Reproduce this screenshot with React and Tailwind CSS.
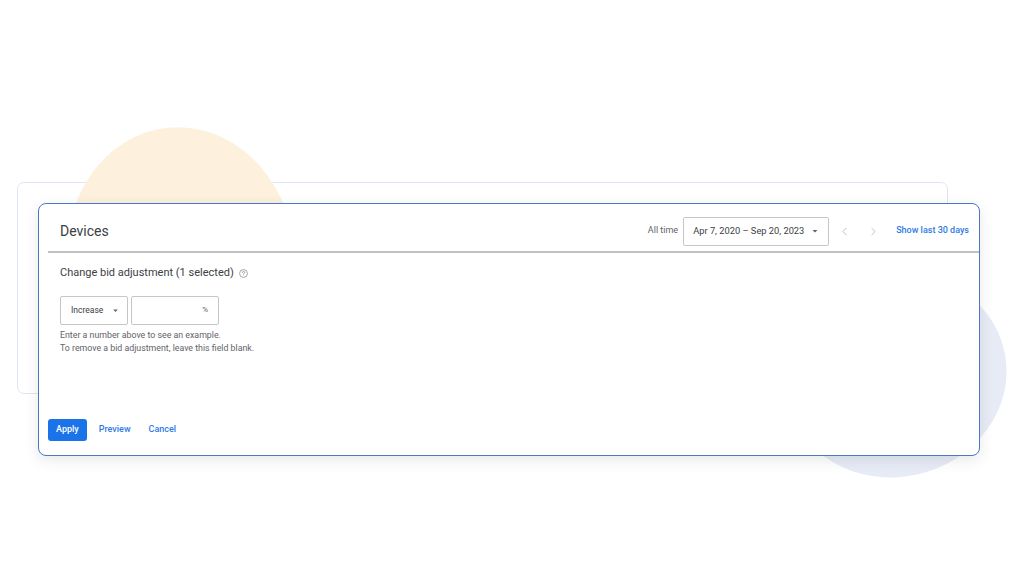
import { ChevronLeft, ChevronRight } from 'lucide-react';

const font = { fontFamily: 'Roboto, "Noto Sans", Arial, sans-serif' };

function Caret({ className = '' }) {
  return (
    <svg viewBox="0 0 24 24" className={className} fill="currentColor">
      <path d="M7 10l5 5 5-5z" />
    </svg>
  );
}

function HelpIcon() {
  return (
    <svg viewBox="0 0 16 16" className="w-[9px] h-[9px] text-[#80868b]" fill="none" stroke="currentColor" strokeWidth="1.3">
      <circle cx="8" cy="8" r="7" />
      <path d="M6 6.2a2 2 0 1 1 2.6 1.9c-.4.2-.6.5-.6.9v.6" strokeLinecap="round" />
      <circle cx="8" cy="11.6" r=".6" fill="currentColor" stroke="none" />
    </svg>
  );
}

export default function App() {
  return (
    <div className="relative w-full h-[579px] bg-white overflow-hidden" style={font}>
      {/* background decoration */}
      <div className="absolute left-[17px] top-[182px] w-[931px] h-[212px] rounded-[7px] border border-[#dfe6f3] bg-white" />
      <div className="absolute left-[67px] top-[127px] w-[228px] h-[262px] rounded-[50%] bg-[#fdf0dc] -rotate-[6deg]" />
      <div className="absolute left-[783px] top-[273px] w-[224px] h-[204px] rounded-[50%] bg-[#e7ebf6] rotate-[-12deg]" />

      {/* main card */}
      <div className="relative ml-[38px] pt-[203px]">
        <div className="w-[942px] h-[253px] flex flex-col rounded-[8px] border-[1.5px] border-[#4a78c4] bg-white shadow-[0_4px_14px_rgba(60,64,67,0.12)]">
          <div className="flex items-center h-[47px] pt-[7px] pl-[21px] pr-[10px]">
            <span className="text-[14px] text-[#3c4043]">Devices</span>
            <div className="ml-auto flex items-center">
              <span className="text-[9px] text-[#5f6368] mr-[5px]">All time</span>
              <div className="flex items-center w-[146px] h-[29px] border border-[#c4c7c5] rounded-[2px] pl-[9px] pr-[7px]">
                <span className="text-[9.3px] text-[#3c4043]">Apr 7, 2020 – Sep 20, 2023</span>
                <Caret className="ml-auto w-[12px] h-[12px] text-[#5f6368]" />
              </div>
              <ChevronLeft className="ml-[9px] w-[13px] h-[13px] text-[#aeb2b7]" strokeWidth={1.5} />
              <ChevronRight className="ml-[16px] w-[13px] h-[13px] text-[#aeb2b7]" strokeWidth={1.5} />
              <span className="ml-[16px] text-[9px] font-medium text-[#2f7ae5]">Show last 30 days</span>
            </div>
          </div>
          <div className="ml-[9px] h-[1.5px] bg-[#bfc2c5]" />

          <div className="pl-[21px] pt-[13px]">
            <div className="flex items-center gap-[5px] h-[16px]">
              <span className="text-[11px] text-[#3c4043]">Change bid adjustment (1 selected)</span>
              <HelpIcon />
            </div>
            <div className="flex gap-[3px] mt-[14px]">
              <div className="flex items-center w-[68px] h-[29px] border border-[#c4c7c5] rounded-[2px] pl-[10px] pr-[6px]">
                <span className="text-[8.5px] text-[#3c4043]">Increase</span>
                <Caret className="ml-auto w-[11px] h-[11px] text-[#5f6368]" />
              </div>
              <div className="flex items-center justify-end w-[88px] h-[29px] border border-[#c4c7c5] rounded-[2px] pr-[10px]">
                <span className="text-[8px] text-[#5f6368]">%</span>
              </div>
            </div>
            <div className="mt-[4px] text-[8.8px] leading-[13px] text-[#5f6368]">
              <p>Enter a number above to see an example.</p>
              <p>To remove a bid adjustment, leave this field blank.</p>
            </div>
          </div>

          <div className="mt-auto flex items-center pl-[9px] pb-[14px]">
            <button className="h-[22px] px-[8px] rounded-[3px] bg-[#1a73e8] text-white text-[9px] font-medium">Apply</button>
            <button className="ml-[12px] text-[9px] font-medium text-[#2f7ae5]">Preview</button>
            <button className="ml-[18px] text-[9px] font-medium text-[#2f7ae5]">Cancel</button>
          </div>
        </div>
      </div>
    </div>
  );
}
